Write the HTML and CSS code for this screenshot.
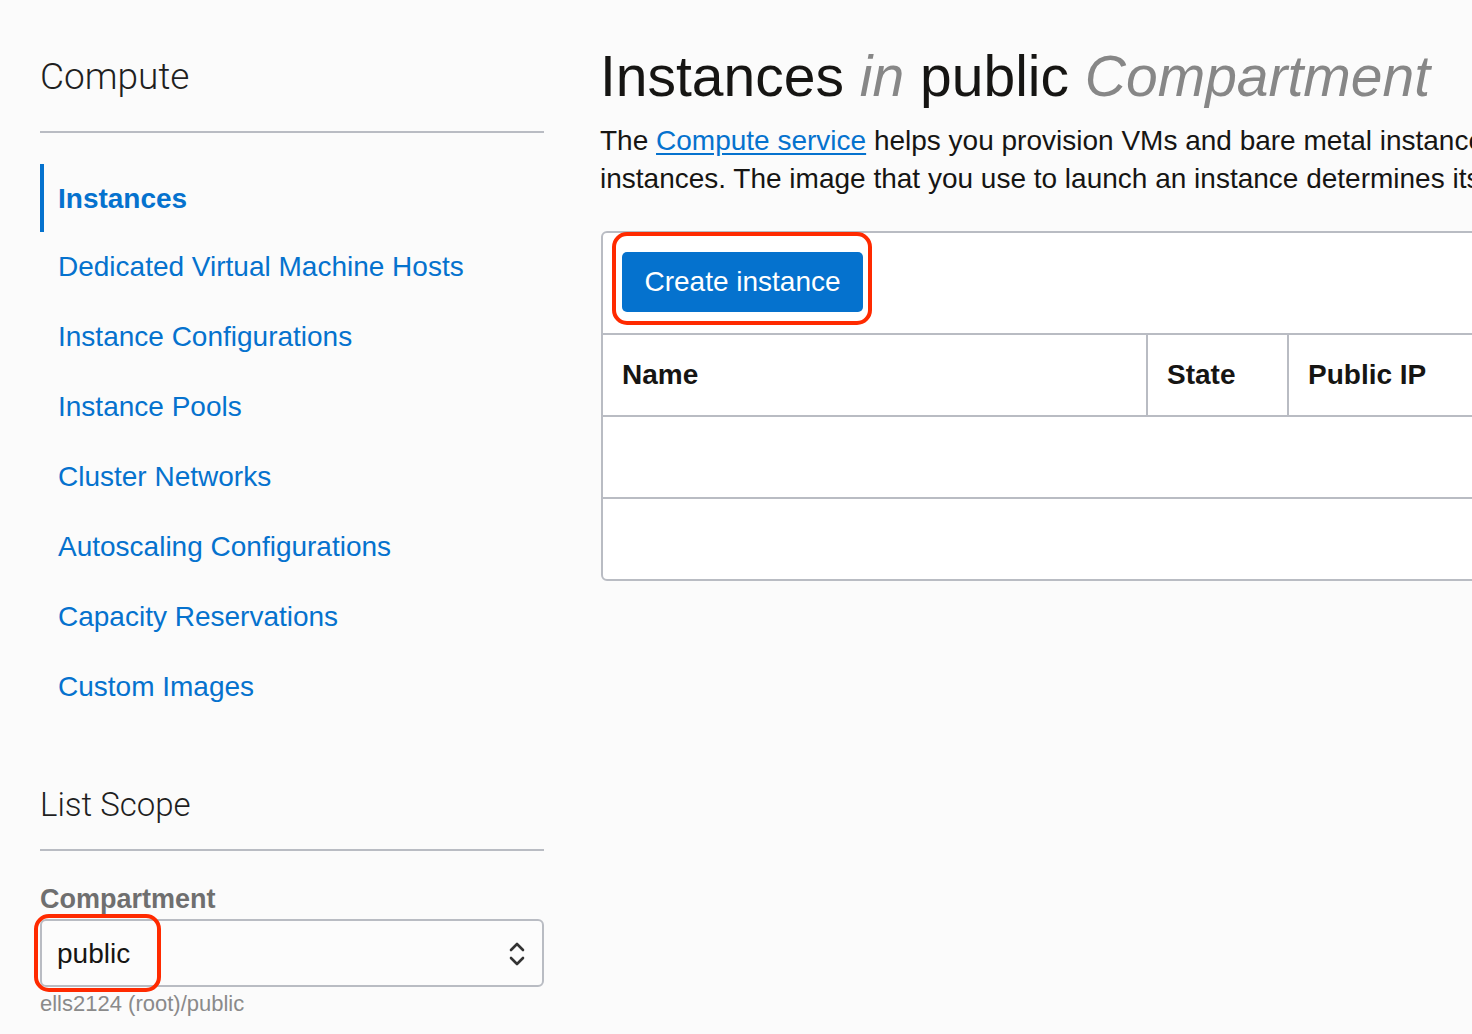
FILE: index.html
```html
<!DOCTYPE html>
<html lang="en">
<head>
<meta charset="utf-8">
<title>Instances</title>
<link rel="stylesheet" href="styles.css">
</head>
<body>
<div class="page">
  <aside class="sidebar">
    <h2 class="side-title">Compute</h2>
    <nav class="side-nav">
      <a class="nav-item active" href="#">Instances</a>
      <a class="nav-item" href="#">Dedicated Virtual Machine Hosts</a>
      <a class="nav-item" href="#">Instance Configurations</a>
      <a class="nav-item" href="#">Instance Pools</a>
      <a class="nav-item" href="#">Cluster Networks</a>
      <a class="nav-item" href="#">Autoscaling Configurations</a>
      <a class="nav-item" href="#">Capacity Reservations</a>
      <a class="nav-item" href="#">Custom Images</a>
    </nav>
    <h2 class="side-title scope-title">List Scope</h2>
    <div class="field">
      <label class="field-label">Compartment</label>
      <div class="select">
        <span class="select-value">public</span>
        <svg class="chevrons" width="18" height="30" viewBox="0 0 18 30">
          <path d="M3 11 L9 5 L15 11" fill="none" stroke="#333" stroke-width="2.6" stroke-linecap="round" stroke-linejoin="round"/>
          <path d="M3 19 L9 25 L15 19" fill="none" stroke="#333" stroke-width="2.6" stroke-linecap="round" stroke-linejoin="round"/>
        </svg>
        <span class="highlight hl-select"></span>
      </div>
      <div class="field-hint">ells2124 (root)/public</div>
    </div>
  </aside>
  <main class="main">
    <h1 class="title">Instances <em>in</em> public <em>Compartment</em></h1>
    <p class="intro"><span class="line">The <a href="#">Compute service</a> helps you provision VMs and bare metal instances to meet your compute and application requirements. You can launch and manage</span><span class="line">instances. The image that you use to launch an instance determines its operating system and other software.</span></p>
    <section class="table-box">
      <div class="toolbar">
        <div class="btn-wrap">
          <button class="btn-primary">Create instance</button>
          <span class="highlight hl-btn"></span>
        </div>
      </div>
      <div class="row header">
        <div class="cell">Name</div>
        <div class="cell">State</div>
        <div class="cell">Public IP</div>
      </div>
      <div class="row">
        <div class="cell"></div>
      </div>
      <div class="row last">
        <div class="cell"></div>
      </div>
    </section>
  </main>
</div>
</body>
</html>
```
FILE: styles.css
```css
html, body {
  margin: 0;
  padding: 0;
  background: #fbfbfb;
  overflow: hidden;
  width: 1472px;
  height: 1034px;
}
body {
  font-family: "Liberation Sans", Arial, sans-serif;
  color: #161513;
}
.page {
  display: flex;
  padding-left: 40px;
  gap: 56px;
  width: 2400px;
}
.sidebar {
  width: 504px;
  flex: 0 0 504px;
  display: flex;
  flex-direction: column;
}
.side-title {
  margin: 55px 0 0;
  font-family: "Roboto", "Liberation Sans", sans-serif;
  font-weight: 300;
  font-size: 37px;
  line-height: 44px;
  color: #1f1f1f;
  padding-bottom: 32px;
  border-bottom: 2px solid #b9bcc3;
}
.side-nav {
  display: flex;
  flex-direction: column;
  margin-top: 31px;
}
.nav-item {
  display: block;
  height: 70px;
  line-height: 70px;
  padding-left: 18px;
  font-size: 28px;
  color: #0572ce;
  text-decoration: none;
}
.nav-item.active {
  height: 68px;
  line-height: 70px;
  padding-left: 14px;
  border-left: 4px solid #0572ce;
  font-weight: bold;
}
.scope-title {
  margin-top: 61px;
  font-size: 33px;
  padding-bottom: 22px;
}
.field {
  display: flex;
  flex-direction: column;
  margin-top: 32px;
}
.field-label {
  font-size: 27px;
  line-height: 32px;
  font-weight: bold;
  color: #6f6f6f;
}
.select {
  position: relative;
  margin-top: 4px;
  height: 62px;
  border: 2px solid #b9bcc3;
  border-radius: 6px;
  display: flex;
  align-items: center;
  justify-content: space-between;
  padding: 2px 16px 0 15px;
  box-sizing: content-box;
  background: #fcfcfc;
}
.select-value {
  font-size: 28px;
  color: #161513;
}
.chevrons {
  display: block;
}
.field-hint {
  margin-top: 4px;
  font-size: 22px;
  line-height: 26px;
  color: #8a8a8a;
}
.highlight {
  position: absolute;
  border: 4px solid #ff2a00;
  border-radius: 15px;
  pointer-events: none;
}
.hl-select {
  left: -8px;
  top: -7px;
  width: 119px;
  height: 70px;
}
.main {
  width: 1400px;
  flex: 0 0 1400px;
}
.title {
  margin: 44px 0 0;
  font-size: 57px;
  line-height: 64px;
  font-weight: normal;
  color: #161513;
  white-space: nowrap;
}
.title em {
  color: #878787;
  font-style: italic;
}
.intro {
  margin: 14px 0 0;
  font-size: 28px;
  line-height: 38px;
  color: #161513;
}
.intro .line {
  display: block;
  white-space: nowrap;
}
.intro a {
  color: #0572ce;
  text-decoration: underline;
  text-underline-offset: 3px;
}
.table-box {
  margin-top: 33px;
  margin-left: 1px;
  border: 2px solid #b9bcc3;
  border-radius: 6px;
  background: #fff;
}
.toolbar {
  padding: 19px 0 21px 19px;
  border-bottom: 2px solid #b9bcc3;
  display: flex;
}
.btn-wrap {
  position: relative;
}
.btn-primary {
  display: block;
  width: 241px;
  height: 60px;
  border: none;
  border-radius: 5px;
  background: #0572ce;
  color: #fff;
  font-family: "Liberation Sans", Arial, sans-serif;
  font-size: 28px;
  padding: 0;
}
.hl-btn {
  left: -10px;
  top: -20px;
  width: 252px;
  height: 85px;
}
.row {
  display: grid;
  grid-template-columns: 543px 141px 1fr;
  height: 80px;
  border-bottom: 2px solid #b9bcc3;
}
.row.last {
  border-bottom: none;
}
.row.header .cell + .cell {
  border-left: 2px solid #b9bcc3;
}
.cell {
  display: flex;
  align-items: center;
  padding-left: 19px;
  font-size: 28px;
  font-weight: bold;
  color: #161513;
}
```
